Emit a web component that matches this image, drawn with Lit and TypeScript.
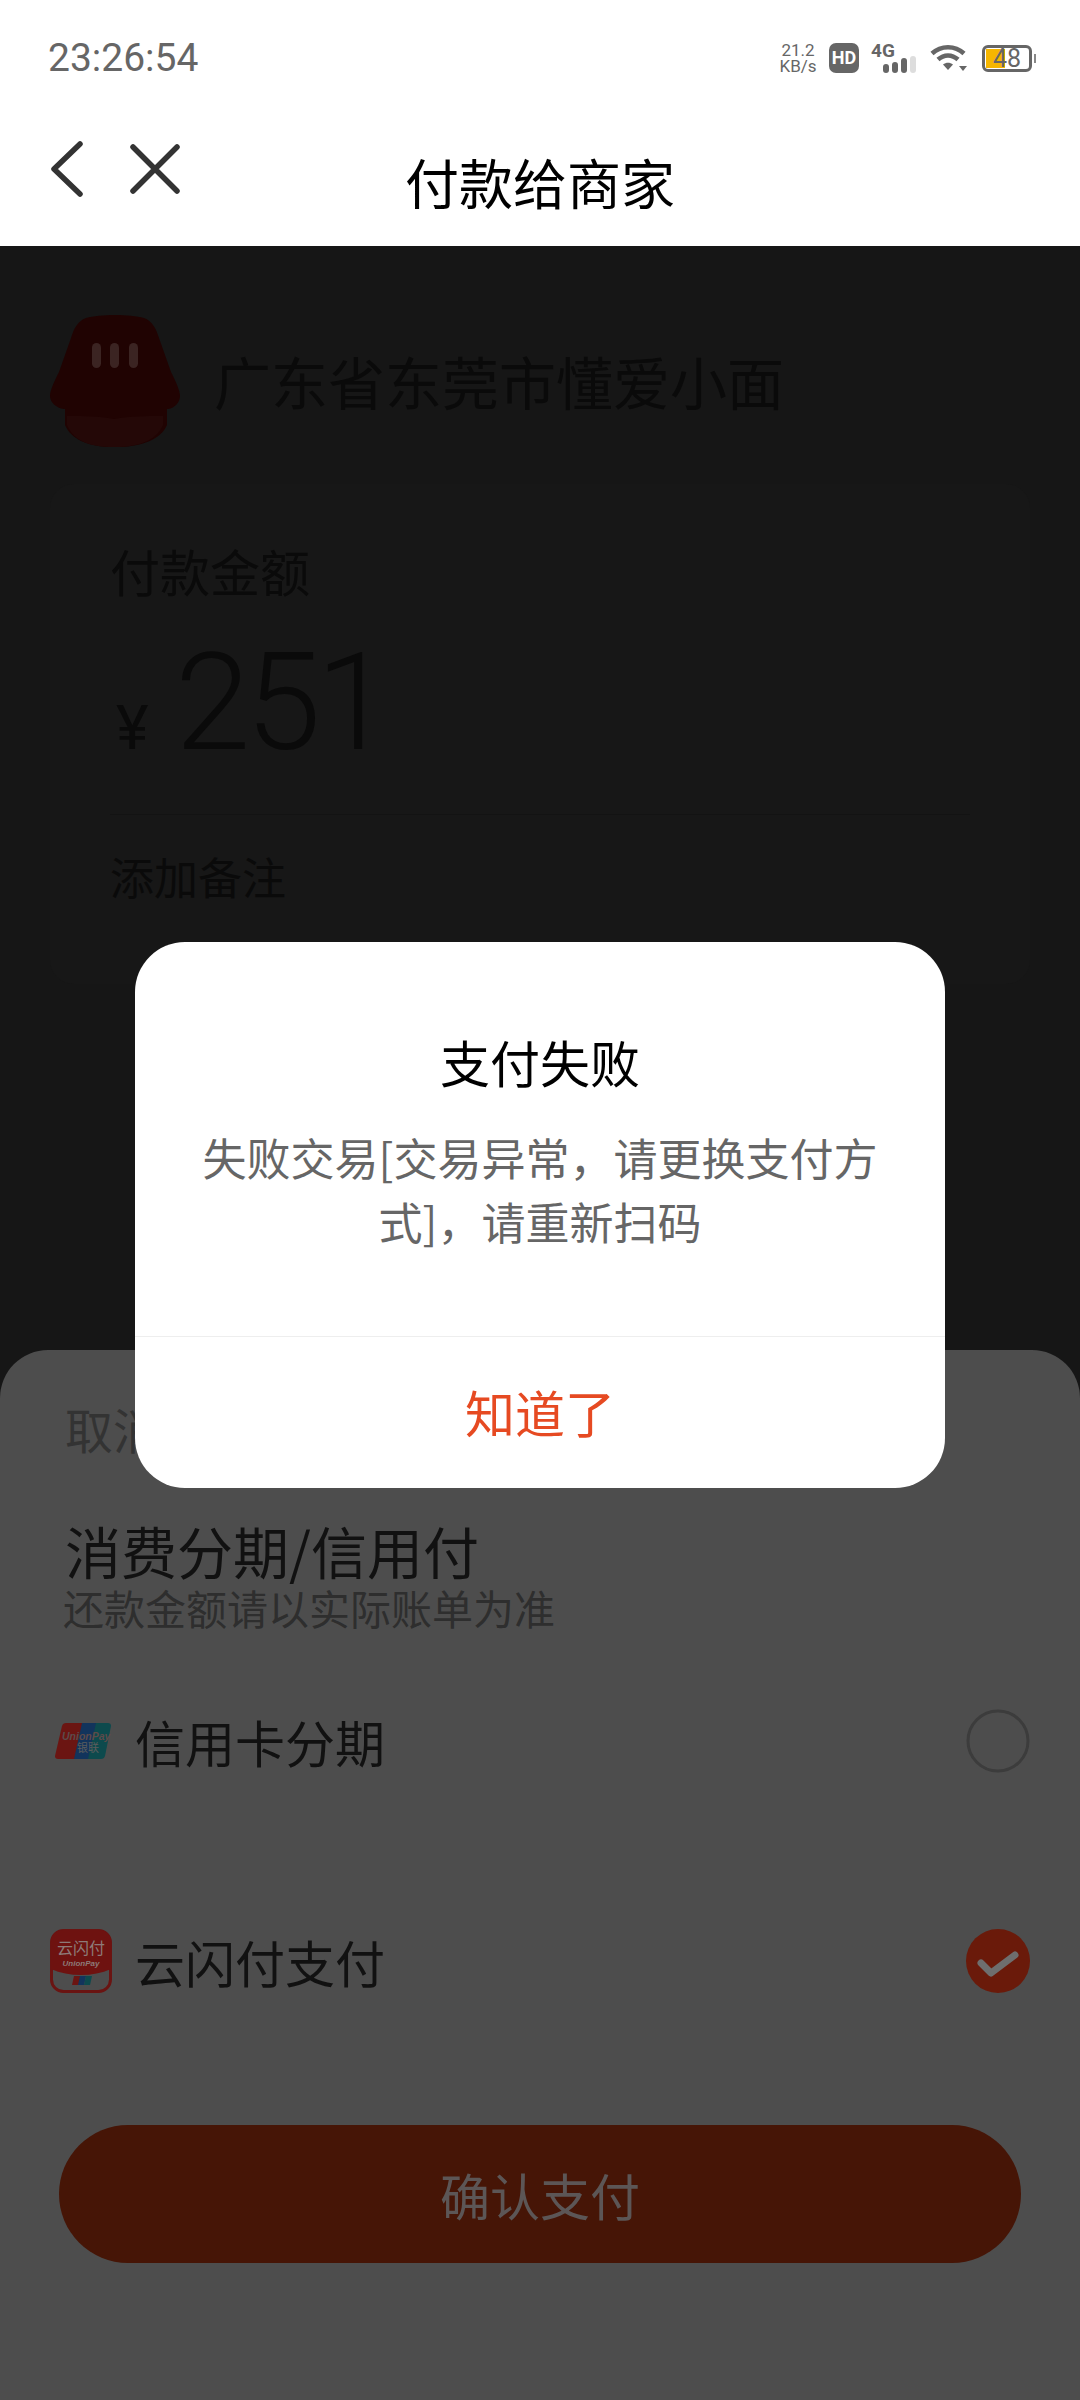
import { LitElement, html, css } from 'lit';
import { customElement } from 'lit/decorators.js';

const CJK = css`'Noto Sans CJK SC', 'Liberation Sans', sans-serif`;

@customElement('app-root')
export class AppRoot extends LitElement {
  static styles = css`
    :host {
      display: block;
      position: relative;
      width: 1080px;
      height: 2400px;
      overflow: hidden;
      background: #161616;
      font-family: ${CJK};
    }

    /* Status bar */
    .status {
      display: flex;
      align-items: center;
      height: 116px;
      padding: 0 48px;
      box-sizing: border-box;
      background: #fff;
      color: #666;
    }
    .time {
      font-family: Roboto, sans-serif;
      font-size: 39px;
      flex: 1;
    }
    .speed {
      font-family: Roboto, sans-serif;
      display: flex;
      flex-direction: column;
      align-items: center;
      width: 38px;
      font-size: 17px;
      line-height: 16px;
    }
    .hd {
      width: 30px;
      height: 30px;
      margin-left: 12px;
      border-radius: 7px;
      background: #666;
      color: #fff;
      font: 700 18px/30px Roboto, sans-serif;
      text-align: center;
    }
    .status svg {
      display: block;
    }
    .signal {
      margin-left: 12px;
    }
    .wifi {
      margin-left: 12px;
    }
    .battery {
      position: relative;
      width: 50px;
      height: 27px;
      margin-left: 15px;
      box-sizing: border-box;
      border: 3px solid #666;
      border-radius: 6px;
      font: 400 25px/21px Roboto, sans-serif;
      text-align: center;
    }
    .battery::before {
      content: '';
      position: absolute;
      left: 1px;
      top: 1px;
      bottom: 1px;
      width: 19px;
      background: #f6b600;
    }
    .battery::after {
      content: '';
      position: absolute;
      right: -7px;
      top: 6px;
      width: 2px;
      height: 9px;
      background: #888;
    }
    .battery span {
      position: relative;
    }

    /* Nav bar */
    .nav {
      position: relative;
      display: flex;
      align-items: center;
      justify-content: center;
      height: 130px;
      background: #fff;
      color: #000;
      font-size: 54px;
    }
    .nav-icons {
      position: absolute;
      left: 48px;
      top: 25px;
      display: flex;
      gap: 46px;
      align-items: center;
    }

    /* Dimmed page */
    .merchant {
      display: flex;
      align-items: center;
      gap: 34px;
      margin: 66px 0 0 50px;
      height: 135px;
      color: #0a0a0a;
      font-size: 57px;
    }
    .card {
      margin: 37px 50px 0;
      height: 500px;
      padding: 56px 60px 0;
      box-sizing: border-box;
      border-radius: 24px;
      background: #171717;
      color: #0a0a0a;
    }
    .label {
      font-size: 50px;
      line-height: 60px;
    }
    .amount {
      display: flex;
      align-items: baseline;
      height: 176px;
      margin-top: 38px;
      border-bottom: 1px solid #131313;
      font-family: Roboto, sans-serif;
    }
    .yen {
      font-size: 62px;
      line-height: 130px;
      width: 65px;
      text-indent: 6px;
    }
    .value {
      font-size: 136px;
      line-height: 130px;
      font-weight: 300;
      letter-spacing: -5px;
    }
    .remark {
      font-size: 44px;
      line-height: 60px;
      margin-top: 31px;
    }

    /* Bottom sheet */
    .sheet {
      position: absolute;
      left: 0;
      right: 0;
      top: 1350px;
      bottom: 0;
      padding: 48px 59px 0 0;
      box-sizing: border-box;
      border-radius: 48px 48px 0 0;
      background: #4d4d4d;
      color: #111;
    }
    .cancel {
      margin-left: 65px;
      font-size: 48px;
      line-height: 60px;
      color: #333;
    }
    .plan {
      margin: 60px 0 0 65px;
      font-size: 56px;
      line-height: 64px;
    }
    .plan-note {
      margin: 1px 0 0 63px;
      font-size: 41px;
      line-height: 48px;
      color: #2e2e2e;
    }
    .row {
      display: flex;
      align-items: center;
      height: 220px;
      padding-left: 135px;
      position: relative;
      font-size: 50px;
    }
    .row-icon {
      position: absolute;
      left: 50px;
      top: 50%;
      transform: translateY(-50%);
      display: block;
    }
    .row-mark {
      position: absolute;
      right: -9px;
      display: block;
    }
    .pay {
      display: flex;
      align-items: center;
      justify-content: center;
      height: 138px;
      margin: 54px 0 0 59px;
      border-radius: 69px;
      background: #461506;
      color: #5c5656;
      font-size: 50px;
    }

    /* Alert dialog */
    .dialog {
      position: absolute;
      left: 135px;
      top: 942px;
      width: 810px;
      height: 546px;
      display: flex;
      flex-direction: column;
      align-items: center;
      border-radius: 50px;
      background: #fff;
      text-align: center;
    }
    .dialog-title {
      margin-top: 84px;
      font-size: 50px;
      line-height: 70px;
      color: #000;
    }
    .dialog-text {
      margin-top: 29px;
      padding: 0 60px;
      height: 128px;
      font-size: 44px;
      line-height: 64px;
      color: #666;
    }
    .dialog-btn {
      flex: 1;
      align-self: stretch;
      display: flex;
      align-items: center;
      justify-content: center;
      margin-top: 83px;
      padding-bottom: 4px;
      border-top: 1px solid #eee;
      font-size: 50px;
      color: #e64a22;
    }
  `;

  render() {
    return html`
      <div class="status">
        <span class="time">23:26:54</span>
        <div class="speed"><span>21.2</span><span>KB/s</span></div>
        <div class="hd">HD</div>
        <svg class="signal" width="47" height="32" viewBox="0 0 47 32">
          <text x="0" y="15" font-family="Roboto, sans-serif" font-weight="700" font-size="19" fill="#666">4G</text>
          <g fill="#666">
            <rect x="12" y="22" width="6" height="9" rx="3" />
            <rect x="21" y="20" width="6" height="11" rx="3" />
            <rect x="30" y="16" width="6" height="15" rx="3" />
          </g>
          <rect x="39" y="14" width="6" height="17" rx="3" fill="#ddd" />
        </svg>
        <svg class="wifi" width="37" height="28" viewBox="0 0 37 28" fill="none" stroke="#666" stroke-width="4.5">
          <path d="M2 9.5C11 1 25 1 34 9.5" />
          <path d="M8 15.5C14 10 22 10 28 15.5" />
          <path d="M18 26l-5-5.5c3-2.5 7-2.5 10 0z" fill="#666" stroke="none" />
          <path d="M29 22h8l-4 5z" fill="#666" stroke="none" />
        </svg>
        <div class="battery"><span>48</span></div>
      </div>

      <div class="nav">
        <div class="nav-icons">
          <svg width="36" height="56" viewBox="0 0 36 56" fill="none" stroke="#333" stroke-width="5.5" stroke-linecap="round" stroke-linejoin="round">
            <path d="M32 3 6 28l26 25" />
          </svg>
          <svg width="50" height="50" viewBox="0 0 50 50" fill="none" stroke="#333" stroke-width="5.5" stroke-linecap="round">
            <path d="M3 3l44 44M47 3 3 47" />
          </svg>
        </div>
        付款给商家
      </div>

      <div class="merchant">
        <svg width="130" height="135" viewBox="0 0 130 135">
          <path d="M36 6C50 2 80 2 94 6c8 3 12 10 15 20l12 34c4 8 9 18 9 24 0 6-5 12-12 13h-1v16c-6 14-24 22-52 22s-44-8-50-22V97H14C6 96 0 90 0 84c0-6 5-16 9-24l12-34C24 16 28 9 36 6z" fill="#200302" />
          <path d="M17 104c20 0 30 0 47 3 17-3 30-3 49-3v9c-6 14-21 22-49 22s-41-8-47-22z" fill="#240807" />
          <g fill="#3b2422">
            <rect x="42" y="31" width="9" height="25" rx="4.5" />
            <rect x="60" y="31" width="9" height="25" rx="4.5" />
            <rect x="79" y="31" width="9" height="25" rx="4.5" />
          </g>
        </svg>
        <span>广东省东莞市懂爱小面</span>
      </div>

      <div class="card">
        <div class="label">付款金额</div>
        <div class="amount">
          <span class="yen">¥</span>
          <span class="value">251</span>
        </div>
        <div class="remark">添加备注</div>
      </div>

      <div class="sheet">
        <div class="cancel">取消</div>
        <div class="plan">消费分期/信用付</div>
        <div class="plan-note">还款金额请以实际账单为准</div>
        <div class="row">
          <svg class="row-icon" width="62" height="40" viewBox="0 0 62 40">
            <path d="M11 2h20L23 38H3c-2 0-3-1-3-3L7 5c.6-2 2-3 4-3z" fill="#6b1512" transform="translate(5 0)" />
            <path d="M27 2h18l-8 36H19z" fill="#12345c" transform="translate(5 0)" />
            <path d="M41 2h12c2 0 3 1 3 3l-6 30c-.6 2-2 3-4 3H33z" fill="#0d4a4d" transform="translate(5 0)" />
            <text x="12" y="19" font-family="Liberation Sans, sans-serif" font-style="italic" font-weight="700" font-size="10.5" fill="#5d4a4a">UnionPay</text>
            <text x="27" y="31" font-family="'Noto Sans CJK SC', sans-serif" font-size="11" fill="#5d5d5d">银联</text>
          </svg>
          信用卡分期
          <svg class="row-mark" width="64" height="64" viewBox="0 0 64 64">
            <circle cx="32" cy="32" r="30" fill="none" stroke="#3c3c3c" stroke-width="3" />
          </svg>
        </div>
        <div class="row">
          <svg class="row-icon" width="62" height="64" viewBox="0 0 62 64">
            <rect x="1.5" y="1.5" width="59" height="61" rx="12" fill="#4d4d4d" stroke="#6a1412" stroke-width="3" />
            <path d="M1 13C1 6 6 1 13 1h36c7 0 12 5 12 12v27c-18 8-42 8-60 0z" fill="#6e1210" />
            <text x="31" y="25" text-anchor="middle" font-family="'Noto Sans CJK SC', sans-serif" font-size="16" fill="#8d7a78">云闪付</text>
            <text x="31" y="37" text-anchor="middle" font-family="Liberation Sans, sans-serif" font-style="italic" font-size="8" font-weight="700" fill="#8d7a78">UnionPay</text>
            <path d="M24 47h7l-2 9h-7z" fill="#6b1512" />
            <path d="M30 47h6l-2 9h-6z" fill="#12345c" />
            <path d="M36 47h6l-2 9h-6z" fill="#0d4a4d" />
          </svg>
          云闪付支付
          <svg class="row-mark" width="64" height="64" viewBox="0 0 64 64">
            <circle cx="32" cy="32" r="32" fill="#6a1a0a" />
            <path d="M15 34l10 10 24-18" fill="none" stroke="#6e6e6e" stroke-width="7" stroke-linecap="round" stroke-linejoin="round" />
          </svg>
        </div>
        <div class="pay">确认支付</div>
      </div>

      <div class="dialog">
        <div class="dialog-title">支付失败</div>
        <div class="dialog-text">失败交易[交易异常，请更换支付方式]，请重新扫码</div>
        <div class="dialog-btn">知道了</div>
      </div>
    `;
  }
}
